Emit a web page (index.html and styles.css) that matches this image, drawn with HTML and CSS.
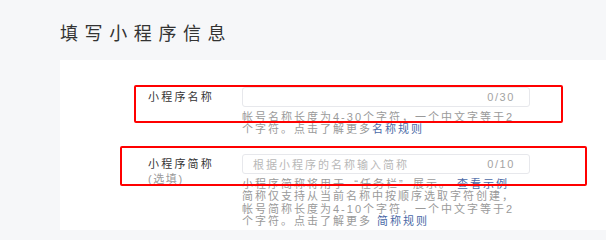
FILE: index.html
```html
<!DOCTYPE html>
<html lang="zh-CN">
<head>
<meta charset="utf-8">
<title>填写小程序信息</title>
<link rel="stylesheet" href="styles.css">
</head>
<body>
<div class="page">
  <h1 class="title">填写小程序信息</h1>
  <div class="card">
    <div class="form-row">
      <div class="label">小程序名称</div>
      <div class="field">
        <div class="input"><span class="placeholder"></span><span class="counter">0/30</span></div>
        <div class="help">帐号名称长度为4-30个字符，一个中文字等于2<br>个字符。点击了解更多<a class="link">名称规则</a></div>
      </div>
    </div>
    <div class="form-row">
      <div class="label">小程序简称<div class="sub">(选填)</div></div>
      <div class="field">
        <div class="input"><span class="placeholder">根据小程序的名称输入简称</span><span class="counter">0/10</span></div>
        <div class="help">小程序简称将用于<span class="q q-open">“</span>任务栏<span class="q q-close">”</span>展示。 <a class="link">查看示例</a><br>简称仅支持从当前名称中按顺序选取字符创建，<br>帐号简称长度为4-10个字符，一个中文字等于2<br>个字符。点击了解更多 <a class="link">简称规则</a></div>
      </div>
    </div>
    <div class="mark mark-name"></div>
    <div class="mark mark-short"></div>
  </div>
</div>
</body>
</html>
```

FILE: styles.css
```css
html, body {
  margin: 0;
  padding: 0;
  background: #f6f7f9;
  font-family: "Liberation Sans", "Noto Sans CJK SC", sans-serif;
  color: #353535;
}

.page {
  width: 606px;
  height: 230px;
  overflow: hidden;
}

.title {
  margin: 0;
  padding: 24px 0 0 60px;
  height: 60px;
  box-sizing: border-box;
  font-size: 18px;
  line-height: 21px;
  font-weight: 400;
  letter-spacing: 6.6px;
  color: #333333;
}

.card {
  position: relative;
  margin: 0 0 0 60px;
  padding: 27px 0 0 88px;
  background: #ffffff;
  height: 170px;
  box-sizing: border-box;
  display: flex;
  flex-direction: column;
  gap: 18px;
}

.form-row {
  display: grid;
  grid-template-columns: 94px 288px;
}

.label {
  font-size: 11px;
  line-height: 20px;
  letter-spacing: 2.2px;
  color: #353535;
}

.sub {
  margin-top: -1px;
  line-height: 13px;
  letter-spacing: 1.6px;
  color: #9a9a9a;
}

.input {
  height: 20px;
  box-sizing: border-box;
  border: 1px solid #e7e8ec;
  border-radius: 3px;
  padding: 0 14px 0 10px;
  display: flex;
  align-items: center;
  justify-content: space-between;
  font-size: 11px;
  letter-spacing: 2px;
}

.placeholder {
  color: #b8b8b8;
}

.counter {
  color: #a3a3a3;
  letter-spacing: 1.6px;
}

.help {
  margin-top: 4px;
  font-size: 11px;
  line-height: 12.4px;
  letter-spacing: 2px;
  color: #9a9a9a;
  white-space: nowrap;
}

.q {
  display: inline-block;
  width: 14px;
}

.q-open {
  text-align: right;
}

.q-close {
  text-align: left;
}

.link {
  color: #4a68a6;
  text-decoration: none;
}

.mark {
  position: absolute;
  border: 2px solid #ff0000;
  border-radius: 2px;
  box-sizing: border-box;
  pointer-events: none;
}

.mark-name {
  left: 74px;
  top: 25px;
  width: 429px;
  height: 38px;
}

.mark-short {
  left: 60px;
  top: 86px;
  width: 467px;
  height: 40px;
}
```
